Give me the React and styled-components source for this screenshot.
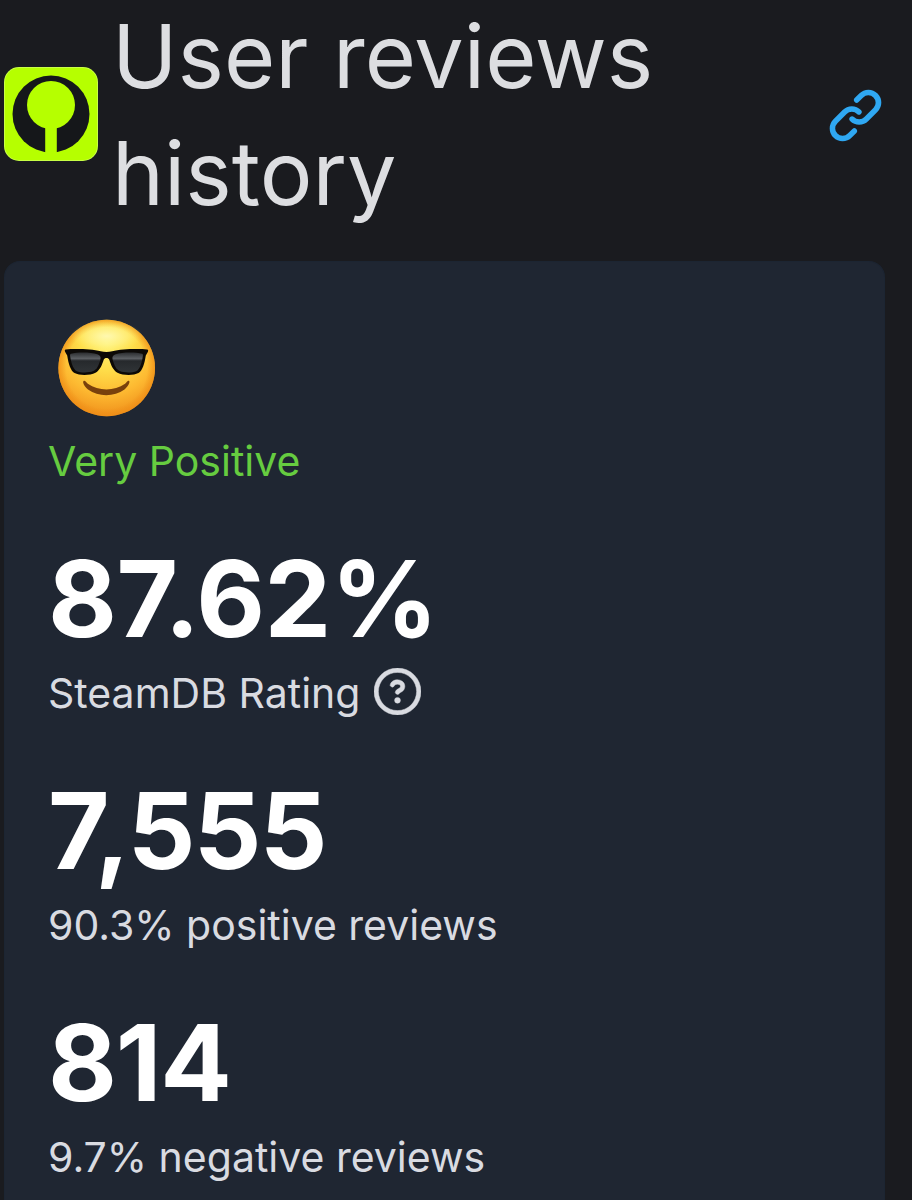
import React from "react";
import styled, { createGlobalStyle } from "styled-components";

const GlobalStyle = createGlobalStyle`
  * {
    box-sizing: border-box;
  }

  body {
    margin: 0;
    background: #1a1b1f;
    font-family: "Inter", "Liberation Sans", sans-serif;
  }
`;

const Page = styled.div`
  height: 1200px;
  padding: 0 27px 0 4px;
  overflow: hidden;
  display: flex;
  flex-direction: column;
`;

const Header = styled.header`
  height: 232px;
  margin-bottom: 29px;
  display: flex;
  align-items: center;
  flex-shrink: 0;
`;

const AppIcon = styled.svg`
  width: 94px;
  height: 94px;
  margin: -4px 14px 0 0;
  flex-shrink: 0;
`;

const Title = styled.h1`
  flex: 1;
  margin: -2px 0 0;
  font-size: 88px;
  font-weight: 400;
  line-height: 117px;
  color: #dddee1;
`;

const Anchor = styled.a`
  display: flex;
  margin-top: -2px;
  color: #2fa8f2;

  svg {
    width: 59px;
    height: 59px;
  }
`;

const Card = styled.section`
  flex: 1;
  padding: 44px 44px 0 43px;
  border: 1px solid #1c2532;
  border-bottom: 0;
  border-radius: 16px 16px 0 0;
  background: #1f2632;
`;

const Stat = styled.div`
  height: 190px;
  margin-bottom: 42px;
`;

const Summary = styled.div`
  height: 187px;
  margin-bottom: 41px;
`;

const EmojiLine = styled.div`
  height: 124px;
  display: flex;
  align-items: center;

  svg {
    width: 120px;
    height: 115px;
    margin: -1px 0 0 -3px;
  }
`;

const Value = styled.div`
  height: 128px;
  font-size: 106px;
  font-weight: 700;
  line-height: 130px;
  white-space: nowrap;
  letter-spacing: ${(props) => props.$spacing};
  color: #fff;
`;

const Label = styled.div`
  display: flex;
  align-items: center;
  gap: 14px;
  height: 62px;
  font-size: 41px;
  line-height: 62px;
  white-space: nowrap;
  color: ${(props) => (props.$positive ? "#66cc40" : "#d9dbe1")};

  svg {
    width: 47px;
    height: 47px;
    margin-top: -3px;
  }
`;

const LinkIcon = () => (
  <svg viewBox="0 0 16 16" fill="currentColor">
    <path d="m7.775 3.275 1.25-1.25a3.5 3.5 0 1 1 4.95 4.95l-2.5 2.5a3.5 3.5 0 0 1-4.95 0 .751.751 0 0 1 .018-1.042.751.751 0 0 1 1.042-.018 1.998 1.998 0 0 0 2.83 0l2.5-2.5a2.002 2.002 0 0 0-2.83-2.83l-1.25 1.25a.751.751 0 0 1-1.042-.018.751.751 0 0 1-.018-1.042Zm-4.69 9.64a1.998 1.998 0 0 0 2.83 0l1.25-1.25a.751.751 0 0 1 1.042.018.751.751 0 0 1 .018 1.042l-1.25 1.25a3.5 3.5 0 1 1-4.95-4.95l2.5-2.5a3.5 3.5 0 0 1 4.95 0 .751.751 0 0 1-.018 1.042.751.751 0 0 1-1.042.018 1.998 1.998 0 0 0-2.83 0l-2.5 2.5a1.998 1.998 0 0 0 0 2.83Z" />
  </svg>
);

const QuestionIcon = () => (
  <svg viewBox="0 0 16 16" fill="currentColor">
    <path
      stroke="currentColor"
      strokeWidth="0.15"
      d="M0 8a8 8 0 1 1 16 0A8 8 0 0 1 0 8Zm8-6.5a6.5 6.5 0 1 0 0 13 6.5 6.5 0 0 0 0-13ZM6.92 6.085h.001a.749.749 0 1 1-1.342-.67c.169-.339.436-.701.849-.977C6.845 4.16 7.369 4 8 4a2.756 2.756 0 0 1 1.637.525c.503.377.863.965.863 1.725 0 .448-.115.83-.329 1.15-.205.307-.47.513-.692.662-.109.072-.22.138-.313.195l-.006.004a6.24 6.24 0 0 0-.26.16.952.952 0 0 0-.276.245.75.75 0 0 1-1.248-.832c.184-.264.42-.489.692-.661.103-.067.207-.132.313-.195l.007-.004c.1-.061.182-.11.258-.161a.969.969 0 0 0 .277-.245C8.96 6.514 9 6.427 9 6.25a.612.612 0 0 0-.262-.525A1.27 1.27 0 0 0 8 5.5c-.369 0-.595.09-.74.187a1.01 1.01 0 0 0-.34.398ZM9 11a1 1 0 1 1-2 0 1 1 0 0 1 2 0Z"
    />
  </svg>
);

const Sunglasses = () => (
  <svg viewBox="0 0 120 115">
    <defs>
      <radialGradient id="face" cx="50%" cy="24%" r="76%">
        <stop offset="0" stopColor="#fff27a" />
        <stop offset="0.35" stopColor="#ffdf4b" />
        <stop offset="0.7" stopColor="#fdb931" />
        <stop offset="1" stopColor="#f0901b" />
      </radialGradient>
      <radialGradient id="edge" cx="50%" cy="50%" r="50%">
        <stop offset="0.84" stopColor="#ee8c15" stopOpacity="0" />
        <stop offset="1" stopColor="#ee8c15" stopOpacity="0.7" />
      </radialGradient>
      <radialGradient id="shine">
        <stop offset="0" stopColor="#fffbc0" stopOpacity="0.8" />
        <stop offset="0.6" stopColor="#fff9a0" stopOpacity="0.4" />
        <stop offset="1" stopColor="#fff27a" stopOpacity="0" />
      </radialGradient>
      <linearGradient id="lens" x1="0" y1="0" x2="0" y2="1">
        <stop offset="0" stopColor="#2b2d30" />
        <stop offset="0.3" stopColor="#5c5f63" />
        <stop offset="0.42" stopColor="#26292c" />
        <stop offset="1" stopColor="#303437" />
      </linearGradient>
    </defs>
    <circle cx="61.7" cy="58" r="48.3" fill="url(#face)" />
    <circle cx="61.7" cy="58" r="48.3" fill="url(#edge)" />
    <ellipse cx="61.7" cy="26" rx="36" ry="15" fill="url(#shine)" />
    <path
      d="M38.600 71c1.400-.8 2.600 1.500 4.200 2.700 11 7.600 26.300 7.600 37.300 0 1.600-1.200 2.700-3.400 4-2.700 1.300.9-1 5.500-4.600 8.500-10.500 7.600-26 7.600-36.500 0-3.800-3-5.800-7.700-4.400-8.500z"
      fill="#79400c"
    />
    <path
      d="M20.700 39.500c9-.8 26-.5 35 1.800 3.500.9 8 .9 11.500 0 9-2.300 26-2.600 35-1.800 1.200.1 1.100 1.300.6 2.600l-2 3.400c-1.300 8.500-3.300 15-7.300 17.500-5 2.600-15.500 2.500-21-.3-4.600-2.500-6.500-8-8.200-13-.8-2.200-4.800-2.200-5.600 0-1.700 5-3.600 10.500-8.200 13-5.500 2.800-16 2.900-21 .3-4-2.500-6-9-7.300-17.500l-2-3.400c-.5-1.300-.7-2.500.5-2.600z"
      fill="#0c0906"
    />
    <path
      d="M25.800 43.700c7-1.700 20-1.600 26.500.5 3.300 1.200 3.600 3.200 3 5.500-1.500 5.400-3.300 9.700-7 11.300-5 2-12.500 1.800-16.500.2-4.200-2.200-6-10.500-6.700-15.500-.1-1 .1-1.800.7-2z"
      fill="url(#lens)"
    />
    <path
      d="M97.200 43.700c-7-1.700-20-1.600-26.500.5-3.300 1.200-3.600 3.200-3 5.500 1.500 5.400 3.300 9.700 7 11.300 5 2 12.500 1.800 16.500.2 4.200-2.200 6-10.500 6.700-15.500.1-1-.1-1.800-.7-2z"
      fill="url(#lens)"
    />
  </svg>
);

const Logo = () => (
  <AppIcon viewBox="0 0 94 94">
    <rect width="94" height="94" rx="15" fill="#c8ff45" />
    <rect x="1" y="1" width="92" height="92" rx="14" fill="#b6ff00" />
    <circle cx="47" cy="47" r="38.5" fill="#15171a" />
    <circle cx="47" cy="38" r="24" fill="#b6ff00" />
    <path d="M41.200 56h11.600v31H41.200z" fill="#b6ff00" />
  </AppIcon>
);

const stats = [
  { value: "87.62%", label: "SteamDB Rating", spacing: "-0.5px", help: true },
  { value: "7,555", label: "90.3% positive reviews", spacing: "-1.7px" },
  { value: "814", label: "9.7% negative reviews", spacing: "-1.2px" },
];

const App = () => {
  return (
    <>
      <GlobalStyle />
      <Page>
        <Header>
          <Logo />
          <Title>User reviews history</Title>
          <Anchor>
            <LinkIcon />
          </Anchor>
        </Header>
        <Card>
          <Summary>
            <EmojiLine>
              <Sunglasses />
            </EmojiLine>
            <Label $positive>Very Positive</Label>
          </Summary>
          {stats.map((stat) => (
            <Stat key={stat.label}>
              <Value $spacing={stat.spacing}>{stat.value}</Value>
              <Label>
                {stat.label}
                {stat.help && <QuestionIcon />}
              </Label>
            </Stat>
          ))}
        </Card>
      </Page>
    </>
  );
};

export default App;
